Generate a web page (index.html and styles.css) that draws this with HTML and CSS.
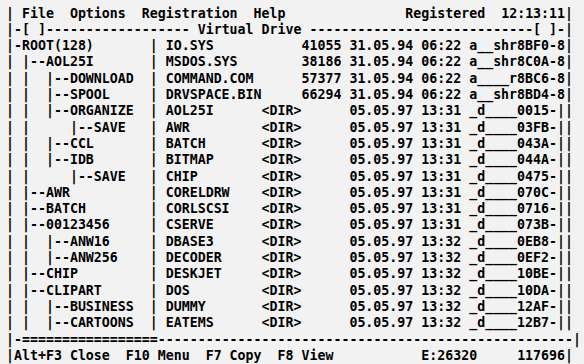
FILE: index.html
```html
<!DOCTYPE html>
<html>
<head>
<meta charset="utf-8">
<link rel="stylesheet" href="styles.css">
</head>
<body>
<div class="screen">
  <div class="line menubar"><span>| File  Options  Registration  Help</span><span>Registered  12:13:11|</span></div>
  <div class="line title">|-[ ]------------------ Virtual Drive ----------------------------[ ]-|</div>
  <div class="panel">
    <div class="row"><span>|</span><span class="tree">-ROOT(128)</span><span>|</span><span class="name">IO.SYS</span><span class="size">41055</span><span class="date">31.05.94</span><span class="time">06:22</span><span class="attr">a__shr8BF0-8</span><span>|</span></div>
    <div class="row"><span>|</span><span class="tree"> |--AOL25I</span><span>|</span><span class="name">MSDOS.SYS</span><span class="size">38186</span><span class="date">31.05.94</span><span class="time">06:22</span><span class="attr">a__shr8C0A-8</span><span>|</span></div>
    <div class="row"><span>|</span><span class="tree"> |  |--DOWNLOAD</span><span>|</span><span class="name">COMMAND.COM</span><span class="size">57377</span><span class="date">31.05.94</span><span class="time">06:22</span><span class="attr">a____r8BC6-8</span><span>|</span></div>
    <div class="row"><span>|</span><span class="tree"> |  |--SPOOL</span><span>|</span><span class="name">DRVSPACE.BIN</span><span class="size">66294</span><span class="date">31.05.94</span><span class="time">06:22</span><span class="attr">a__shr8BD4-8</span><span>|</span></div>
    <div class="row"><span>|</span><span class="tree"> |  |--ORGANIZE</span><span>|</span><span class="name">AOL25I</span><span class="size dir">&lt;DIR&gt;</span><span class="date">05.05.97</span><span class="time">13:31</span><span class="attr">_d____0015-|</span><span>|</span></div>
    <div class="row"><span>|</span><span class="tree"> |     |--SAVE</span><span>|</span><span class="name">AWR</span><span class="size dir">&lt;DIR&gt;</span><span class="date">05.05.97</span><span class="time">13:31</span><span class="attr">_d____03FB-|</span><span>|</span></div>
    <div class="row"><span>|</span><span class="tree"> |  |--CCL</span><span>|</span><span class="name">BATCH</span><span class="size dir">&lt;DIR&gt;</span><span class="date">05.05.97</span><span class="time">13:31</span><span class="attr">_d____043A-|</span><span>|</span></div>
    <div class="row"><span>|</span><span class="tree"> |  |--IDB</span><span>|</span><span class="name">BITMAP</span><span class="size dir">&lt;DIR&gt;</span><span class="date">05.05.97</span><span class="time">13:31</span><span class="attr">_d____044A-|</span><span>|</span></div>
    <div class="row"><span>|</span><span class="tree"> |     |--SAVE</span><span>|</span><span class="name">CHIP</span><span class="size dir">&lt;DIR&gt;</span><span class="date">05.05.97</span><span class="time">13:31</span><span class="attr">_d____0475-|</span><span>|</span></div>
    <div class="row"><span>|</span><span class="tree"> |--AWR</span><span>|</span><span class="name">CORELDRW</span><span class="size dir">&lt;DIR&gt;</span><span class="date">05.05.97</span><span class="time">13:31</span><span class="attr">_d____070C-|</span><span>|</span></div>
    <div class="row"><span>|</span><span class="tree"> |--BATCH</span><span>|</span><span class="name">CORLSCSI</span><span class="size dir">&lt;DIR&gt;</span><span class="date">05.05.97</span><span class="time">13:31</span><span class="attr">_d____0716-|</span><span>|</span></div>
    <div class="row"><span>|</span><span class="tree"> |--00123456</span><span>|</span><span class="name">CSERVE</span><span class="size dir">&lt;DIR&gt;</span><span class="date">05.05.97</span><span class="time">13:31</span><span class="attr">_d____073B-|</span><span>|</span></div>
    <div class="row"><span>|</span><span class="tree"> |  |--ANW16</span><span>|</span><span class="name">DBASE3</span><span class="size dir">&lt;DIR&gt;</span><span class="date">05.05.97</span><span class="time">13:32</span><span class="attr">_d____0EB8-|</span><span>|</span></div>
    <div class="row"><span>|</span><span class="tree"> |  |--ANW256</span><span>|</span><span class="name">DECODER</span><span class="size dir">&lt;DIR&gt;</span><span class="date">05.05.97</span><span class="time">13:32</span><span class="attr">_d____0EF2-|</span><span>|</span></div>
    <div class="row"><span>|</span><span class="tree"> |--CHIP</span><span>|</span><span class="name">DESKJET</span><span class="size dir">&lt;DIR&gt;</span><span class="date">05.05.97</span><span class="time">13:32</span><span class="attr">_d____10BE-|</span><span>|</span></div>
    <div class="row"><span>|</span><span class="tree"> |--CLIPART</span><span>|</span><span class="name">DOS</span><span class="size dir">&lt;DIR&gt;</span><span class="date">05.05.97</span><span class="time">13:32</span><span class="attr">_d____10DA-|</span><span>|</span></div>
    <div class="row"><span>|</span><span class="tree"> |  |--BUSINESS</span><span>|</span><span class="name">DUMMY</span><span class="size dir">&lt;DIR&gt;</span><span class="date">05.05.97</span><span class="time">13:32</span><span class="attr">_d____12AF-|</span><span>|</span></div>
    <div class="row"><span>|</span><span class="tree"> |  |--CARTOONS</span><span>|</span><span class="name">EATEMS</span><span class="size dir">&lt;DIR&gt;</span><span class="date">05.05.97</span><span class="time">13:32</span><span class="attr">_d____12B7-|</span><span>|</span></div>
  </div>
  <div class="line rule">|-=================----------------------------------------------------|</div>
  <div class="line status"><span>|Alt+F3 Close  F10 Menu  F7 Copy  F8 View</span><span>E:26320     117696|</span></div>
</div>
</body>
</html>
```
FILE: styles.css
```css
html, body {
  margin: 0;
  padding: 0;
  background: #f2f2f2;
}

body {
  color: #000;
  font-family: "DejaVu Sans Mono", "Liberation Mono", monospace;
  font-weight: bold;
  font-size: 13.28px;
  line-height: 16.3px;
}

.screen {
  width: 71ch;
  padding: 5.6px 0 0 6px;
}

.line {
  height: 16.3px;
  white-space: pre;
}

.menubar,
.status {
  display: flex;
  justify-content: space-between;
}

.panel {
  display: flex;
  flex-direction: column;
}

.row {
  display: grid;
  grid-template-columns: 1ch 17ch 1ch 13ch 10ch 9ch 6ch 13ch 1ch;
  height: 16.3px;
}

.row > span {
  white-space: pre;
  overflow: hidden;
}

.name,
.date,
.time,
.attr {
  padding-left: 1ch;
}

.size {
  text-align: right;
}

.size.dir {
  text-align: left;
}
```
